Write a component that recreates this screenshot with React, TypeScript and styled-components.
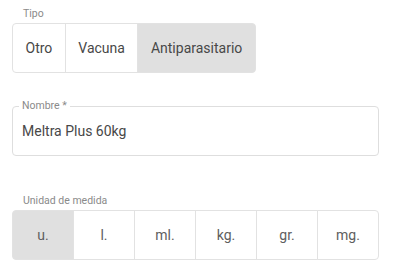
import styled, { createGlobalStyle } from "styled-components";

const GlobalStyle = createGlobalStyle`
  html, body {
    margin: 0;
    padding: 0;
    background: #fff;
  }
  body {
    font-family: Roboto, "Liberation Sans", sans-serif;
    -webkit-font-smoothing: antialiased;
  }
  * {
    box-sizing: border-box;
  }
`;

const tipos = ["Otro", "Vacuna", "Antiparasitario"];
const unidades = ["u.", "l.", "ml.", "kg.", "gr.", "mg."];

export default function App() {
  return (
    <>
      <GlobalStyle />
      <Page>
        <Section>
          <GroupLabel>Tipo</GroupLabel>
          <ToggleGroup>
            {tipos.map((t) => (
              <ToggleButton key={t} $selected={t === "Antiparasitario"}>
                {t}
              </ToggleButton>
            ))}
          </ToggleGroup>
        </Section>

        <Field>
          <FieldLabel>Nombre *</FieldLabel>
          <Input defaultValue="Meltra Plus 60kg" />
        </Field>

        <UnitSection>
          <GroupLabel>Unidad de medida</GroupLabel>
          <ToggleGroup $fill>
            {unidades.map((u) => (
              <ToggleButton key={u} $selected={u === "u."} $fill $muted>
                {u}
              </ToggleButton>
            ))}
          </ToggleGroup>
        </UnitSection>
      </Page>
    </>
  );
}

const Page = styled.div`
  width: 396px;
  padding: 8px 17px 0 12px;
`;

const Section = styled.div`
  display: flex;
  flex-direction: column;
  gap: 3px;
`;

const UnitSection = styled(Section)`
  margin-top: 39px;
`;

const GroupLabel = styled.span`
  font-size: 10.5px;
  line-height: 12px;
  color: #8a8a8a;
  margin-left: 11px;
`;

const ToggleGroup = styled.div<{ $fill?: boolean }>`
  display: ${(p) => (p.$fill ? "flex" : "inline-flex")};
  align-self: ${(p) => (p.$fill ? "stretch" : "flex-start")};
`;

const ToggleButton = styled.button<{
  $selected?: boolean;
  $fill?: boolean;
  $muted?: boolean;
}>`
  flex: ${(p) => (p.$fill ? "1 1 0" : "0 0 auto")};
  height: 50px;
  padding: 0 12.5px;
  margin: 0 0 0 -1px;
  border: 1px solid #e2e2e2;
  border-radius: 0;
  background: ${(p) => (p.$selected ? "#e0e0e0" : "#fff")};
  color: ${(p) => (p.$muted ? "#5e5e5e" : "#484848")};
  font-family: Roboto, "Liberation Sans", sans-serif;
  font-size: 14px;
  line-height: 24px;
  text-align: center;
  cursor: pointer;

  &:first-child {
    margin-left: 0;
    border-radius: 4px 0 0 4px;
  }
  &:last-child {
    border-radius: 0 4px 4px 0;
  }
`;

const Field = styled.div`
  position: relative;
  margin-top: 33px;
`;

const FieldLabel = styled.label`
  position: absolute;
  top: -6px;
  left: 7px;
  padding: 0 3px;
  background: #fff;
  font-size: 10.5px;
  line-height: 12px;
  color: #8a8a8a;
`;

const Input = styled.input`
  display: block;
  width: 100%;
  height: 50px;
  padding: 0 9px;
  border: 1px solid #dedede;
  border-radius: 4px;
  font-family: Roboto, "Liberation Sans", sans-serif;
  font-size: 14px;
  color: #484848;
  outline: none;
`;
